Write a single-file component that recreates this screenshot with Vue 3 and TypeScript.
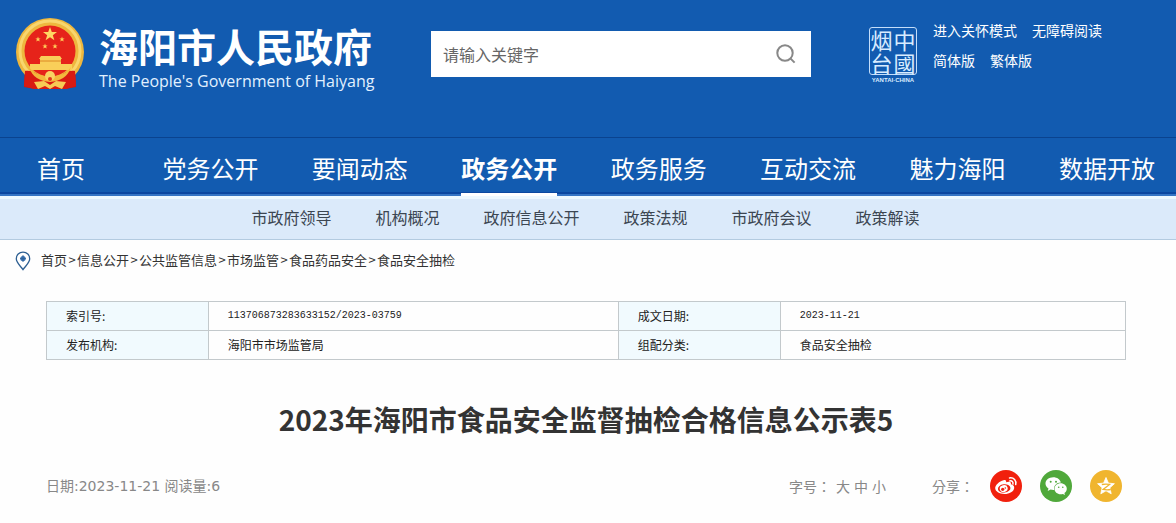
<script setup lang="ts">
import { ref } from 'vue'

interface InfoRow {
  label: string
  value: string
  label2: string
  value2: string
}

const keyword = ref('')
const navItems: string[] = ['首页', '党务公开', '要闻动态', '政务公开', '政务服务', '互动交流', '魅力海阳', '数据开放']
const activeNav = ref('政务公开')
const subItems: string[] = ['市政府领导', '机构概况', '政府信息公开', '政策法规', '市政府会议', '政策解读']
const crumbs: string[] = ['首页', '信息公开', '公共监管信息', '市场监管', '食品药品安全', '食品安全抽检']
const rows: InfoRow[] = [
  { label: '索引号:', value: '113706873283633152/2023-03759', label2: '成文日期:', value2: '2023-11-21' },
  { label: '发布机构:', value: '海阳市市场监管局', label2: '组配分类:', value2: '食品安全抽检' },
]
const sizes: string[] = ['大', '中', '小']
</script>

<template>
  <div class="page">
    <header class="top">
      <a class="brand" href="#">
        <svg class="emblem" viewBox="0 0 68 72" aria-hidden="true">
          <path d="M9 52h50l1 17-11 2-15-3-15 3-11-2z" fill="#d3160f" />
          <circle cx="34" cy="34" r="34" fill="#eeb73e" />
          <circle cx="34" cy="33" r="30" fill="none" stroke="#f8d66e" stroke-width="3" />
          <circle cx="34" cy="33" r="25.500" fill="#e6231a" />
          <path d="M9 53c7-1 12 2 16 7l9 3 9-3c4-5 9-8 16-7l1 15-10 3H18L8 68z" fill="#d81a12" />
          <path d="M34 9l1.800 5h5.200l-4.200 3.200 1.600 5-4.400-3-4.400 3 1.600-5-4.200-3.200h5.200z" fill="#ffd763" />
          <g fill="#ffcf5a">
            <path id="star" d="M22 18.500l.7 1.900h2l-1.600 1.200.6 1.900-1.700-1.100-1.700 1.100.6-1.900-1.600-1.200h2z" />
            <use href="#star" x="24" />
            <use href="#star" x="7" y="7" />
            <use href="#star" x="17" y="7" />
          </g>
          <path d="M25 38h19l2 3h-1v5h11v6H14v-6h10v-5h-1z" fill="#f9cf59" />
          <path d="M24 43h21" stroke="#dc8a27" stroke-width="1" />
          <path d="M13 49c5 7 12 9 21 10 9-1 16-3 21-10-3 10-11 14-21 15-10-1-18-5-21-15z" fill="#f3b83c" />
          <circle cx="34" cy="58" r="5" fill="#f9d463" />
          <path d="M18 64l10-1 6 4 6-4 10 1-4 7-7-3-5 3-5-3-7 3z" fill="#f7cb55" />
          <circle cx="34" cy="61" r="2" fill="#df3a1e" />
        </svg>
        <span class="brand-text">
          <strong>海阳市人民政府</strong>
          <span class="brand-en">The People's Government of Haiyang</span>
        </span>
      </a>
      <form class="search" role="search" @submit.prevent>
        <input v-model="keyword" type="text" placeholder="请输入关键字" aria-label="请输入关键字" />
        <button type="submit" aria-label="搜索">
          <svg viewBox="0 0 20 20" aria-hidden="true">
            <circle cx="9" cy="9" r="7.700" />
            <path d="M14.600 14.600l4 4" />
          </svg>
        </button>
      </form>
      <a class="yantai" href="#">
        <span class="seal"><span>烟</span><span>中</span><span>台</span><span>國</span></span>
        <span class="seal-en">YANTAI·CHINA</span>
      </a>
      <div class="tools">
        <p><a href="#">进入关怀模式</a><a href="#">无障碍阅读</a></p>
        <p><a href="#">简体版</a><a href="#">繁体版</a></p>
      </div>
    </header>

    <nav class="main-nav">
      <a v-for="item in navItems" :key="item" href="#" :class="{ active: item === activeNav }">{{ item }}</a>
    </nav>
    <nav class="sub-nav">
      <a v-for="item in subItems" :key="item" href="#">{{ item }}</a>
    </nav>

    <nav class="crumbs">
      <svg viewBox="0 0 16 20" aria-hidden="true">
        <path d="M8 1.200c-3.900 0-6.700 2.800-6.700 6.500C1.300 11.500 5 14.500 8 18.600c3-4.100 6.700-7.100 6.700-10.900C14.700 4 11.900 1.200 8 1.200z" fill="#fff" stroke="#2d5f92" stroke-width="1.300" />
        <circle cx="8" cy="7.600" r="2.700" fill="#3c74b5" />
        <path d="M8 4v7M5 7.600h6" stroke="#2d5f92" stroke-width=".8" />
      </svg>
      <template v-for="(crumb, i) in crumbs" :key="crumb">
        <span v-if="i > 0" class="sep">&gt;</span><a href="#">{{ crumb }}</a>
      </template>
    </nav>

    <main>
      <table>
        <tbody>
          <tr v-for="row in rows" :key="row.label">
            <th scope="row">{{ row.label }}</th>
            <td class="wide" :class="{ num: row.value.startsWith('1') }">{{ row.value }}</td>
            <th scope="row">{{ row.label2 }}</th>
            <td :class="{ num: row.value2.startsWith('2') }">{{ row.value2 }}</td>
          </tr>
        </tbody>
      </table>
      <h1>2023年海阳市食品安全监督抽检合格信息公示表5</h1>
      <div class="meta">
        <span class="date">日期:2023-11-21 阅读量:6</span>
        <div class="sizes">
          <span>字号：</span>
          <button v-for="s in sizes" :key="s" type="button">{{ s }}</button>
        </div>
        <div class="share">
          <span>分享：</span>
          <a href="#" aria-label="微博">
            <svg viewBox="0 0 32 32" aria-hidden="true">
              <circle cx="16" cy="16" r="16" fill="#f1200d" />
              <path d="M13.500 10.300c1.800-.6 3 .1 2.600 2 2.700-1 5.400-.7 4.800 1.900 2 .5 3.500 1.700 3.300 3.700-.3 3.500-4.700 6-9.700 6-5.200 0-9.300-2.300-9.300-5.800 0-3 4.200-6.800 8.300-7.800z" fill="#fff" />
              <ellipse cx="14.200" cy="18.400" rx="6.300" ry="4.200" fill="#f1200d" transform="rotate(-7 14.200 18.400)" />
              <ellipse cx="13.700" cy="18.600" rx="4" ry="3.400" fill="#fff" transform="rotate(-15 13.700 18.600)" />
              <circle cx="12.700" cy="19.300" r="1.600" fill="#f1200d" />
              <circle cx="15.300" cy="18" r=".8" fill="#f1200d" />
              <path d="M19.800 10.900c2.200-.4 3.600 1 3.100 3.100M19.500 7.900c4.300-.7 7.200 2.700 6.200 6.700" fill="none" stroke="#fff" stroke-width="1.500" stroke-linecap="round" />
            </svg>
          </a>
          <a href="#" aria-label="微信">
            <svg viewBox="0 0 32 32" aria-hidden="true">
              <circle cx="16" cy="16" r="16" fill="#50a83b" />
              <path d="M13.300 7.300c-4.400 0-7.800 2.800-7.800 6.300 0 2.100 1.100 3.800 3 5l-.8 2.500 2.900-1.500c1 .3 1.800.4 2.700.4h.9c-.9-4.200 2.600-7.500 6.700-7.400-.7-3.100-3.800-5.300-7.600-5.300z" fill="#fff" />
              <path d="M26.800 18.800c0-3.100-2.900-5.500-6.100-5.500-3.500 0-6.200 2.400-6.200 5.500s2.700 5.500 6.200 5.500c.7 0 1.500-.2 2.200-.4l2.100 1.200-.6-2c1.500-1.100 2.400-2.600 2.400-4.300z" fill="#fff" />
              <g fill="#50a83b">
                <circle cx="10.700" cy="11.700" r="1" /><circle cx="16" cy="11.700" r="1" />
                <circle cx="18.700" cy="17.300" r=".8" /><circle cx="22.800" cy="17.300" r=".8" />
              </g>
            </svg>
          </a>
          <a href="#" aria-label="QQ空间">
            <svg viewBox="0 0 32 32" aria-hidden="true">
              <circle cx="16" cy="16" r="16" fill="#f0b52f" />
              <path d="M16 7.500l2.400 5.600 6 .6-4.500 4.100 1.300 6-5.200-3-5.200 3 1.300-6-4.500-4.100 6-.6z" fill="#fff" stroke="#fff" stroke-width=".8" stroke-linejoin="round" />
              <path d="M11.800 14.500c2.600-.6 5.200-.6 7.800-.1l-6.500 5c2.500.5 5 .5 7.700.1" fill="none" stroke="#f0b52f" stroke-width="1.300" />
            </svg>
          </a>
        </div>
      </div>
    </main>
  </div>
</template>

<style>
body {
  margin: 0;
  background: #fefefe;
}
</style>

<style scoped>
.page {
  font-family: "Noto Sans CJK SC", sans-serif;
  color: #333;
  overflow: hidden;
}
a {
  color: inherit;
  text-decoration: none;
}
button {
  border: 0;
  padding: 0;
  background: none;
  font: inherit;
  color: inherit;
  cursor: pointer;
}
svg {
  display: block;
}
.top {
  display: flex;
  align-items: flex-start;
  box-sizing: border-box;
  min-height: 137px;
  padding: 15px 16px 0;
  background: #125bb0;
  color: #fff;
}
.brand {
  display: flex;
  gap: 15px;
  width: 415px;
}
.emblem {
  width: 68px;
  height: 72px;
  margin-top: 3px;
}
.brand-text {
  display: flex;
  flex-direction: column;
  padding-top: 2px;
}
.brand-text strong {
  font-size: 39px;
  line-height: 56px;
  white-space: nowrap;
}
.brand-en {
  font: 16px/16px "Open Sans", sans-serif;
  white-space: nowrap;
  color: #e2f1ff;
}
.search {
  display: flex;
  align-items: center;
  width: 380px;
  height: 46px;
  margin-top: 16px;
  background: #fff;
}
.search input {
  flex: 1;
  min-width: 0;
  border: 0;
  outline: 0;
  padding: 0 12px;
  background: none;
  font: 16px/24px "Noto Sans CJK SC", sans-serif;
  color: #444;
}
.search input::placeholder {
  color: #666;
  opacity: 1;
}
.search button {
  padding: 0 15px;
}
.search svg {
  width: 20px;
  height: 20px;
  fill: none;
  stroke: #888;
  stroke-width: 2;
}
.yantai {
  display: flex;
  flex-direction: column;
  align-items: center;
  margin: 12px 0 0 58px;
  color: #d8ecff;
}
.seal {
  display: grid;
  grid-template-columns: 23px 23px;
  border: 1px solid #c4defa;
  border-radius: 3px;
  font-size: 22px;
  line-height: 23px;
  text-align: center;
}
.seal-en {
  font: bold 6px/10px "Liberation Sans", sans-serif;
}
.tools {
  margin-left: 16px;
  font-size: 14px;
  line-height: 30px;
}
.tools p {
  display: flex;
  gap: 15px;
  margin: 0;
}
.tools a {
  white-space: nowrap;
}
.main-nav {
  display: flex;
  justify-content: space-between;
  padding: 0 21px 0 37px;
  height: 58px;
  border-top: 1px solid #0a438f;
  background: linear-gradient(#125bb0 54px, #0a47a0 54px, #0a47a0 56px, #3474c4 56px);
  color: #fff;
  font-size: 24px;
  line-height: 60px;
}
.main-nav a {
  box-sizing: border-box;
  height: 58px;
  white-space: nowrap;
}
.main-nav a:first-child {
  margin-right: 24px;
}
.main-nav .active {
  border-bottom: 3px solid #fff;
  font-weight: bold;
}
.sub-nav {
  display: flex;
  justify-content: center;
  gap: 44px;
  padding-right: 5px;
  border-bottom: 1px solid #b3cbe0;
  background: linear-gradient(#ecf8ff 3px, #dbeafa 3px);
  color: #3c4652;
  font-size: 16px;
  line-height: 43px;
}
.crumbs {
  display: flex;
  align-items: center;
  padding: 0 15px;
  height: 42px;
  font-size: 13px;
  line-height: 20px;
}
.crumbs a,
.sep {
  padding-bottom: 2px;
}
.crumbs svg {
  width: 16px;
  height: 20px;
  margin-right: 10px;
}
.sep {
  width: 10px;
  text-align: center;
}
main {
  padding: 19px 50px 0 46px;
}
table {
  width: 100%;
  table-layout: fixed;
  border-collapse: collapse;
  font-size: 12px;
  line-height: 28px;
  color: #222;
}
th,
td {
  border: 1px solid #c3c9cc;
  padding: 0 0 0 19px;
  text-align: left;
  font-weight: normal;
}
th {
  width: 15%;
  background: #f1fafe;
  box-sizing: border-box;
}
.wide {
  width: 38%;
  box-sizing: border-box;
}
.num {
  font-family: "Liberation Mono", monospace;
  font-size: 10px;
}
h1 {
  margin: 38px 0 0;
  font-size: 28px;
  line-height: 42px;
  text-align: center;
  color: #333;
}
.meta {
  display: flex;
  align-items: center;
  margin-top: 30px;
  padding-right: 4px;
  font-size: 14px;
  line-height: 32px;
  color: #888;
}
.date {
  flex: 1;
  font-family: "DejaVu Sans", "Noto Sans CJK SC", sans-serif;
}
.sizes,
.share {
  display: flex;
  align-items: center;
}
.sizes button {
  margin-left: 4px;
}
.sizes span,
.share span {
  font-family: "Noto Sans CJK TC", sans-serif;
}
.sizes span {
  margin-right: 1px;
}
.share {
  margin-left: 46px;
}
.share a {
  margin-left: 18px;
}
.share span {
  margin-right: -2px;
}
.share svg {
  width: 32px;
  height: 32px;
}
</style>
